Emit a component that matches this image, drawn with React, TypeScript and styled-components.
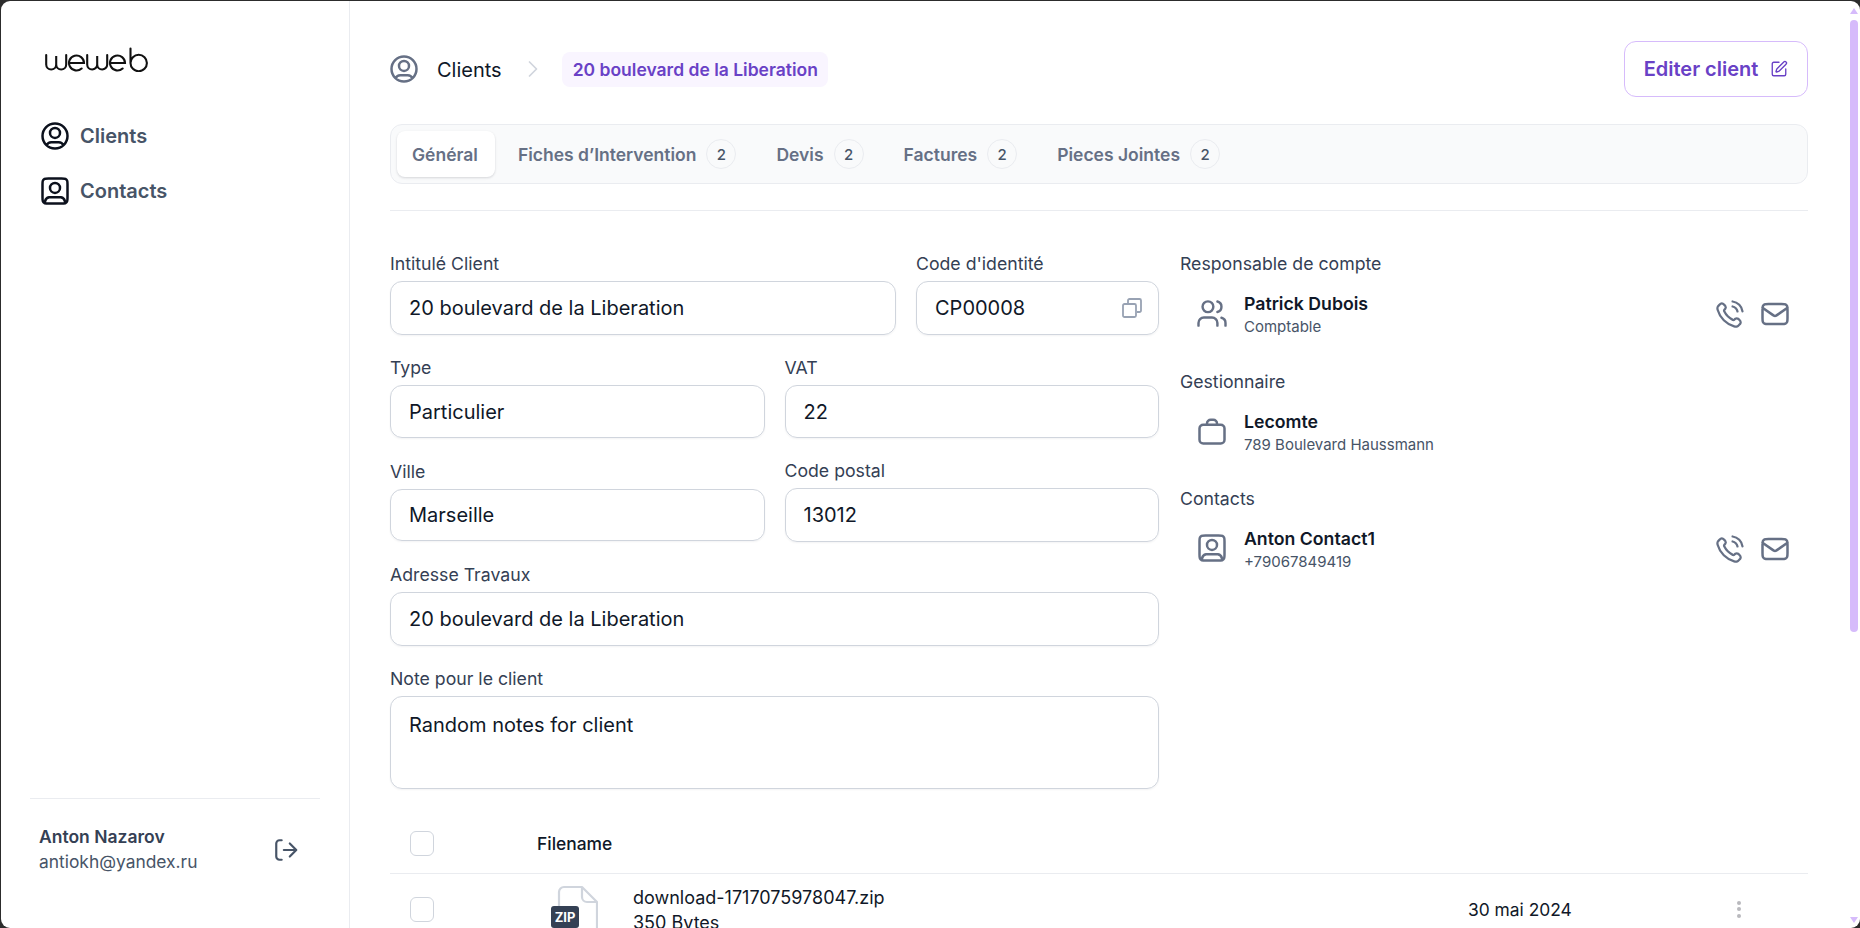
import React from "react";
import styled, { createGlobalStyle } from "styled-components";
import { ChevronRight } from "lucide-react";

const Global = createGlobalStyle`
  html, body, #root { margin: 0; padding: 0; height: 100%; }
  body { background: #2c2c2c; overflow: hidden; font-family: Inter, "Noto Sans", sans-serif; color: #101828; }
  * { box-sizing: border-box; }
`;

const Shell = styled.div`
  position: relative;
  height: 927px;
  margin: 1px 0 0 1px;
  background: #fff;
  border-radius: 9px;
  overflow: hidden;
  display: flex;
`;

const ScrollThumb = styled.div`
  position: absolute;
  top: 19px;
  right: 2px;
  width: 8px;
  height: 612px;
  border-radius: 4px;
  background: #d6bbfb;
`;

const ScrollArrow = styled.div<{ $down?: boolean }>`
  position: absolute;
  right: 2px;
  width: 0;
  height: 0;
  border-left: 4.5px solid transparent;
  border-right: 4.5px solid transparent;
  ${(p) =>
    p.$down
      ? "bottom: 5px; border-top: 6px solid #d6bbfb;"
      : "top: 7px; border-bottom: 6px solid #d6bbfb;"}
`;

const Sidebar = styled.aside`
  width: 349px;
  flex: none;
  border-right: 1px solid #eaecf0;
  padding: 46px 29px 0;
  display: flex;
  flex-direction: column;
`;

const Logo = styled.svg`
  width: 104px;
  height: 25px;
  margin-left: 15px;
  display: block;
  color: #111;
`;

const Nav = styled.nav`
  margin-top: 49px;
  display: flex;
  flex-direction: column;
  gap: 25px;
  padding-left: 10px;
`;

const NavItem = styled.a`
  display: flex;
  align-items: center;
  gap: 10px;
  height: 30px;
  font-size: 20px;
  font-weight: 600;
  color: #475467;
`;

const Footer = styled.div`
  margin-top: auto;
  height: 130px;
  border-top: 1px solid #eaecf0;
  padding: 26px 21px 0 9px;
  display: flex;
  justify-content: space-between;
  align-items: flex-start;
`;

const UserName = styled.div`
  font-size: 17.5px;
  font-weight: 600;
  line-height: 24px;
  color: #344054;
`;

const UserMail = styled.div`
  font-size: 17.4px;
  line-height: 24px;
  margin-top: 1px;
  color: #475467;
`;

const LogoutIcon = styled.svg`
  width: 26px;
  height: 26px;
  margin-top: 12px;
  color: #475467;
`;

const Main = styled.main`
  flex: 1;
  height: 927px;
  overflow: hidden;
  padding: 40px 52px 0 40px;
`;

const Header = styled.header`
  height: 56px;
  display: flex;
  align-items: center;
`;

const CrumbIcon = styled.span`
  display: flex;
  margin-left: -1px;
`;

const Crumb = styled.span`
  font-size: 20px;
  line-height: 28px;
  margin: 2px 0 0 18px;
  color: #101828;
`;

const CrumbSep = styled(ChevronRight)`
  width: 28px;
  height: 28px;
  margin: 0 15px 0 17px;
  color: #d0d5dd;
`;

const CrumbBadge = styled.span`
  height: 35px;
  padding: 0 10px 0 11px;
  border-radius: 8px;
  background: #f9f5ff;
  color: #6941c6;
  font-size: 17.5px;
  font-weight: 600;
  display: flex;
  align-items: center;
`;

const EditButton = styled.button`
  margin-left: auto;
  width: 184px;
  height: 56px;
  border: 1px solid #d6bbfb;
  border-radius: 12px;
  background: #fff;
  color: #6941c6;
  font: 600 20px Inter, sans-serif;
  display: flex;
  align-items: center;
  justify-content: center;
  gap: 12px;
`;

const Tabs = styled.div`
  margin-top: 27px;
  height: 60px;
  border: 1px solid #eaecf0;
  border-radius: 12px;
  background: #f9fafb;
  padding: 6px;
  display: flex;
  gap: 8px;
`;

const Tab = styled.div<{ $active?: boolean }>`
  height: 46px;
  padding: 0 17px 0 15px;
  border-radius: 8px;
  font-size: 17.5px;
  font-weight: 600;
  color: #667085;
  display: flex;
  align-items: center;
  gap: 10px;
  background: ${(p) => (p.$active ? "#fff" : "transparent")};
  box-shadow: ${(p) => (p.$active ? "0 1px 3px rgba(16,24,40,.1), 0 1px 2px rgba(16,24,40,.06)" : "none")};
`;

const Count = styled.span`
  width: 30px;
  height: 30px;
  border-radius: 50%;
  border: 1px solid #eaecf0;
  background: #f9fafb;
  color: #475467;
  font-size: 15px;
  font-weight: 500;
  display: flex;
  align-items: center;
  justify-content: center;
`;

const Rule = styled.hr`
  margin: 26px 0 0;
  height: 1px;
  border: 0;
  background: #eaecf0;
`;

const Columns = styled.div`
  margin-top: 41px;
  display: grid;
  grid-template-columns: 769px 1fr;
  column-gap: 21px;
`;

const Form = styled.form`
  display: grid;
  grid-template-columns: repeat(12, 1fr);
  column-gap: 20px;
  row-gap: 21px;
  align-items: center;
`;

const Field = styled.div<{ $span: number }>`
  grid-column: span ${(p) => p.$span};
  display: flex;
  flex-direction: column;
  gap: 5px;
  min-width: 0;
`;

const Label = styled.label`
  display: block;
  font-size: 17.7px;
  font-weight: 400;
  line-height: 24px;
  color: #344054;
`;

const Box = styled.div<{ $h: number; $top?: boolean }>`
  height: ${(p) => p.$h}px;
  border: 1px solid #d0d5dd;
  border-radius: 12px;
  padding: ${(p) => (p.$top ? "15px 18px" : "0 18px")};
  font-size: 20px;
  line-height: 26px;
  color: #101828;
  display: flex;
  align-items: ${(p) => (p.$top ? "flex-start" : "center")};
  justify-content: space-between;
  box-shadow: 0 1px 2px rgba(16, 24, 40, 0.05);
`;

const CopyIcon = styled.svg`
  width: 20px;
  height: 20px;
  margin-right: -2px;
  color: #98a2b3;
`;

const Side = styled.div`
  display: flex;
  flex-direction: column;
  gap: 32.5px;
`;

const Person = styled.div`
  height: 45px;
  margin-top: 16px;
  padding: 0 18px 0 17px;
  display: flex;
  align-items: center;
`;

const PersonIcon = styled.div`
  width: 30px;
  margin: 0 17px 3px 0;
  display: flex;
  align-items: center;
  justify-content: center;
  color: #667085;
`;

const PersonName = styled.div`
  font-size: 17.7px;
  font-weight: 600;
  line-height: 24px;
  color: #101828;
`;

const PersonSub = styled.div`
  font-size: 15px;
  line-height: 20px;
  margin-top: 1px;
  color: #475467;
`;

const Actions = styled.div`
  margin: 0 0 2px auto;
  display: flex;
  gap: 15px;
  color: #667085;
`;

const Table = styled.section`
  margin-top: 22px;
`;

const Row = styled.div<{ $head?: boolean }>`
  display: grid;
  grid-template-columns: 147px 931px 260px 1fr;
  align-items: center;
  padding-top: ${(p) => (p.$head ? "20px" : "0")};
  padding-bottom: ${(p) => (p.$head ? "17px" : "0")};
  height: ${(p) => (p.$head ? "63px" : "70px")};
  border-bottom: ${(p) => (p.$head ? "1px solid #eaecf0" : "none")};
`;

const Check = styled.span`
  display: block;
  margin-left: 20px;
  width: 24px;
  height: 25px;
  border: 1px solid #d0d5dd;
  border-radius: 6px;
  background: #fff;
`;

const HeadCell = styled.div`
  font-size: 17.4px;
  font-weight: 500;
  color: #101828;
`;

const FileCell = styled.div`
  display: flex;
  align-items: flex-start;
  height: 100%;
  padding: 11px 0 0 14px;
`;

const FileThumb = styled.div`
  position: relative;
  width: 47px;
  height: 56px;
  margin-right: 35px;
  flex: none;
`;

const ZipTag = styled.span`
  position: absolute;
  left: 0;
  top: 21px;
  width: 28px;
  height: 22px;
  border-radius: 3px;
  background: #344054;
  color: #fff;
  font-size: 13px;
  font-weight: 700;
  line-height: 22px;
  text-align: center;
`;

const FileName = styled.div`
  font-size: 18px;
  line-height: 25px;
  color: #101828;
`;

const DateCell = styled.div`
  font-size: 17.4px;
  color: #101828;
`;

const Dots = styled.div`
  width: 22px;
  display: flex;
  flex-direction: column;
  align-items: center;
  gap: 2.5px;
`;

const Dot = styled.span`
  width: 4px;
  height: 4px;
  border-radius: 50%;
  background: #b9b9bd;
`;

const UserCirclePath = "M5.3163 19.4384C5.92462 18.0052 7.34492 17 9 17H15C16.6551 17 18.0754 18.0052 18.6837 19.4384M16 9.5C16 11.7091 14.2091 13.5 12 13.5C9.79086 13.5 8 11.7091 8 9.5C8 7.29086 9.79086 5.5 12 5.5C14.2091 5.5 16 7.29086 16 9.5ZM22 12C22 17.5228 17.5228 22 12 22C6.47715 22 2 17.5228 2 12C2 6.47715 6.47715 2 12 2C17.5228 2 22 6.47715 22 12Z";
const UserSquarePath = "M4 21.8174C4.6026 22 5.41649 22 6.8 22H17.2C18.5835 22 19.3974 22 20 21.8174M4 21.8174C3.87081 21.7783 3.75134 21.7308 3.63803 21.673C3.07354 21.3854 2.6146 20.9265 2.32698 20.362C2 19.7202 2 18.8802 2 17.2V6.8C2 5.11984 2 4.27976 2.32698 3.63803C2.6146 3.07354 3.07354 2.6146 3.63803 2.32698C4.27976 2 5.11984 2 6.8 2H17.2C18.8802 2 19.7202 2 20.362 2.32698C20.9265 2.6146 21.3854 3.07354 21.673 3.63803C22 4.27976 22 5.11984 22 6.8V17.2C22 18.8802 22 19.7202 21.673 20.362C21.3854 20.9265 20.9265 21.3854 20.362 21.673C20.2487 21.7308 20.1292 21.7783 20 21.8174M4 21.8174C4.00033 21.0081 4.00518 20.5799 4.07686 20.2196C4.39249 18.6329 5.63288 17.3925 7.21964 17.0769C7.60603 17 8.07069 17 9 17H15C15.9293 17 16.394 17 16.7804 17.0769C18.3671 17.3925 19.6075 18.6329 19.9231 20.2196C19.9948 20.5799 19.9997 21.0081 20 21.8174M16 9.5C16 11.7091 14.2091 13.5 12 13.5C9.79086 13.5 8 11.7091 8 9.5C8 7.29086 9.79086 5.5 12 5.5C14.2091 5.5 16 7.29086 16 9.5Z";
const PhonePath = "M14.0497 6C15.0264 6.19057 15.924 6.66826 16.6277 7.37194C17.3314 8.07561 17.8091 8.97326 17.9997 9.95M14.0497 2C16.0789 2.22544 17.9713 3.13417 19.4159 4.57701C20.8606 6.01984 21.7717 7.91101 21.9997 9.94M10.2266 13.8631C9.02506 12.6615 8.07627 11.3028 7.38028 9.85323C7.32041 9.72854 7.29048 9.66619 7.26748 9.5873C7.18576 9.30695 7.24446 8.96269 7.41447 8.72526C7.46231 8.65845 7.51947 8.60129 7.63378 8.48698C7.98338 8.13737 8.15819 7.96257 8.27247 7.78679C8.70347 7.1239 8.70347 6.26932 8.27247 5.60643C8.15819 5.43065 7.98338 5.25585 7.63378 4.90624L7.43891 4.71137C6.90747 4.17993 6.64174 3.91421 6.35636 3.76987C5.7888 3.4828 5.11854 3.4828 4.55098 3.76987C4.2656 3.91421 3.99987 4.17993 3.46843 4.71137L3.3108 4.86901C2.78117 5.39863 2.51636 5.66344 2.31411 6.02348C2.08969 6.42298 1.92833 7.04347 1.9297 7.5017C1.93092 7.91464 2.01103 8.19687 2.17124 8.76131C3.03221 11.7947 4.65668 14.6571 7.04466 17.045C9.43264 19.433 12.295 21.0575 15.3284 21.9185C15.8928 22.0787 16.1751 22.1588 16.588 22.16C17.0462 22.1614 17.6667 22 18.0662 21.7756C18.4263 21.5733 18.6911 21.3085 19.2207 20.7789L19.3783 20.6213C19.9098 20.0898 20.1755 19.8241 20.3198 19.5387C20.6069 18.9712 20.6069 18.3009 20.3198 17.7333C20.1755 17.448 19.9098 17.1822 19.3783 16.6508L19.1835 16.4559C18.8339 16.1063 18.6591 15.9315 18.4833 15.8172C17.8204 15.3862 16.9658 15.3862 16.3029 15.8172C16.1271 15.9315 15.9523 16.1063 15.6027 16.4559C15.4884 16.5702 15.4313 16.6274 15.3644 16.6752C15.127 16.8453 14.7828 16.904 14.5024 16.8222C14.4235 16.7992 14.3612 16.7693 14.2365 16.7094C12.7869 16.0134 11.4282 15.0646 10.2266 13.8631Z";
const MailPath = "M2 7L10.1649 12.7154C10.8261 13.1783 11.1567 13.4097 11.5163 13.4993C11.8339 13.5785 12.1661 13.5785 12.4837 13.4993C12.8433 13.4097 13.1739 13.1783 13.8351 12.7154L22 7M6.8 20H17.2C18.8802 20 19.7202 20 20.362 19.673C20.9265 19.3854 21.3854 18.9265 21.673 18.362C22 17.7202 22 16.8802 22 15.2V8.8C22 7.11984 22 6.27976 21.673 5.63803C21.3854 5.07354 20.9265 4.6146 20.362 4.32698C19.7202 4 18.8802 4 17.2 4H6.8C5.11984 4 4.27976 4 3.63803 4.32698C3.07354 4.6146 2.6146 5.07354 2.32698 5.63803C2 6.27976 2 7.11984 2 8.8V15.2C2 16.8802 2 17.7202 2.32698 18.362C2.6146 18.9265 3.07354 19.3854 3.63803 19.673C4.27976 20 5.11984 20 6.8 20Z";

const Ico = ({ d, size = 30, w = 2, color }: { d: string; size?: number; w?: number; color: string }) => (
  <svg width={size} height={size} viewBox="0 0 24 24" fill="none" stroke={color} strokeWidth={w} strokeLinecap="round" strokeLinejoin="round" style={{ flex: "none" }}>
    <path d={d} />
  </svg>
);

const ContactActions = () => (
  <Actions>
    <Ico d={PhonePath} color="#667085" w={1.8} />
    <Ico d={MailPath} color="#667085" />
  </Actions>
);

const tabs = [
  { label: "Fiches d’Intervention", n: 2 },
  { label: "Devis", n: 2 },
  { label: "Factures", n: 2 },
  { label: "Pieces Jointes", n: 2 },
];

export default function App() {
  return (
    <Shell>
      <Global />
      <Sidebar>
        <Logo viewBox="0 0 104 25" fill="none" stroke="currentColor" strokeWidth={2.1} strokeLinecap="round" role="img" aria-label="weweb">
          <path d="M1.2 8v9.5a5 5 0 0 0 10 0V9v8.5a5 5 0 0 0 10 0V8" />
          <path d="M24 16h15a7.5 7.5 0 1 0-2.4 5.5" />
          <path d="M42.2 8v9.5a5 5 0 0 0 10 0V9v8.5a5 5 0 0 0 10 0V8" />
          <path d="M65 16h15a7.5 7.5 0 1 0-2.4 5.5" />
          <path d="M85.5 1.5V16a8.2 8.2 0 1 0 8.2-8.2 8.2 8.2 0 0 0-8.2 8.2" />
        </Logo>
        <Nav>
          <NavItem><Ico d={UserCirclePath} color="#0c111d" />Clients</NavItem>
          <NavItem><Ico d={UserSquarePath} color="#0c111d" />Contacts</NavItem>
        </Nav>
        <Footer>
          <div>
            <UserName>Anton Nazarov</UserName>
            <UserMail>antiokh@yandex.ru</UserMail>
          </div>
          <LogoutIcon viewBox="0 0 24 24" fill="none" stroke="currentColor" strokeWidth={2} strokeLinecap="round" strokeLinejoin="round">
            <path d="M8 3H6a3 3 0 0 0-3 3v12a3 3 0 0 0 3 3h2" />
            <path d="M10 12h11M15.5 6l6 6-6 6" />
          </LogoutIcon>
        </Footer>
      </Sidebar>

      <Main>
        <Header>
          <CrumbIcon><Ico d={UserCirclePath} color="#667085" /></CrumbIcon>
          <Crumb>Clients</Crumb>
          <CrumbSep strokeWidth={1.5} />
          <CrumbBadge>20 boulevard de la Liberation</CrumbBadge>
          <EditButton>
            Editer client
            <svg width="18" height="18" viewBox="0 0 24 24" fill="none" stroke="currentColor" strokeWidth={1.8} strokeLinecap="round" strokeLinejoin="round">
              <path d="M12 3H5a2 2 0 0 0-2 2v14a2 2 0 0 0 2 2h14a2 2 0 0 0 2-2v-7" />
              <path d="M18.375 2.625a1 1 0 0 1 3 3l-9.013 9.014a2 2 0 0 1-.853.505l-2.873.84a.5.5 0 0 1-.62-.62l.84-2.873a2 2 0 0 1 .506-.852z" />
            </svg>
          </EditButton>
        </Header>

        <Tabs>
          <Tab $active>Général</Tab>
          {tabs.map((t) => (
            <Tab key={t.label}>
              {t.label}
              <Count>{t.n}</Count>
            </Tab>
          ))}
        </Tabs>
        <Rule />

        <Columns>
          <Form>
            <Field $span={8}>
              <Label>Intitulé Client</Label>
              <Box $h={54}>20 boulevard de la Liberation</Box>
            </Field>
            <Field $span={4}>
              <Label>Code d'identité</Label>
              <Box $h={54}>
                CP00008
                <CopyIcon viewBox="0 0 20 20" fill="none" stroke="currentColor" strokeWidth={1.8}>
                  <rect x="1" y="6" width="13" height="13" rx="1.5" />
                  <path d="M6 5.5V2.5A1.5 1.5 0 0 1 7.5 1h10A1.5 1.5 0 0 1 19 2.5v10a1.5 1.5 0 0 1-1.5 1.5H15" />
                </CopyIcon>
              </Box>
            </Field>
            <Field $span={6}>
              <Label>Type</Label>
              <Box $h={53}>Particulier</Box>
            </Field>
            <Field $span={6}>
              <Label>VAT</Label>
              <Box $h={53}>22</Box>
            </Field>
            <Field $span={6}>
              <Label>Ville</Label>
              <Box $h={52}>Marseille</Box>
            </Field>
            <Field $span={6}>
              <Label>Code postal</Label>
              <Box $h={54}>13012</Box>
            </Field>
            <Field $span={12}>
              <Label>Adresse Travaux</Label>
              <Box $h={54}>20 boulevard de la Liberation</Box>
            </Field>
            <Field $span={12}>
              <Label>Note pour le client</Label>
              <Box $h={93} $top>Random notes for client</Box>
            </Field>
          </Form>

          <Side>
            <div>
              <Label>Responsable de compte</Label>
              <Person>
                <PersonIcon>
                  <svg width="30" height="27" viewBox="1 2 22 20" fill="none" stroke="currentColor" strokeWidth={1.8} strokeLinecap="round" strokeLinejoin="round">
                    <path d="M16 21v-2a4 4 0 0 0-4-4H6a4 4 0 0 0-4 4v2" />
                    <circle cx="9" cy="7" r="4" />
                    <path d="M22 21v-2a4 4 0 0 0-3-3.87" />
                    <path d="M16 3.13a4 4 0 0 1 0 7.75" />
                  </svg>
                </PersonIcon>
                <div>
                  <PersonName>Patrick Dubois</PersonName>
                  <PersonSub>Comptable</PersonSub>
                </div>
                <ContactActions />
              </Person>
            </div>
            <div>
              <Label>Gestionnaire</Label>
              <Person>
                <PersonIcon>
                  <svg width="30" height="30" viewBox="0 0 24 24" fill="none" stroke="currentColor" strokeWidth={2} strokeLinecap="round" strokeLinejoin="round">
                    <rect x="2" y="7" width="20" height="15" rx="3" />
                    <path d="M8 7V6a3 3 0 0 1 3-3h2a3 3 0 0 1 3 3v1" />
                  </svg>
                </PersonIcon>
                <div>
                  <PersonName>Lecomte</PersonName>
                  <PersonSub>789 Boulevard Haussmann</PersonSub>
                </div>
              </Person>
            </div>
            <div>
              <Label>Contacts</Label>
              <Person>
                <PersonIcon>
                  <Ico d={UserSquarePath} color="currentColor" />
                </PersonIcon>
                <div>
                  <PersonName>Anton Contact1</PersonName>
                  <PersonSub>+79067849419</PersonSub>
                </div>
                <ContactActions />
              </Person>
            </div>
          </Side>
        </Columns>

        <Table>
          <Row $head>
            <Check />
            <HeadCell>Filename</HeadCell>
          </Row>
          <Row>
            <Check />
            <FileCell>
              <FileThumb>
                <svg width="47" height="56" viewBox="0 0 47 56" fill="none" stroke="#d0d5dd" strokeWidth={2.2} strokeLinejoin="round">
                  <path d="M13 2h18l15 15v38H8V7a5 5 0 0 1 5-5z" />
                  <path d="M31 2v10a5 5 0 0 0 5 5h10" />
                </svg>
                <ZipTag>ZIP</ZipTag>
              </FileThumb>
              <div>
                <FileName>download-1717075978047.zip</FileName>
                <FileName>350 Bytes</FileName>
              </div>
            </FileCell>
            <DateCell>30 mai 2024</DateCell>
            <Dots><Dot /><Dot /><Dot /></Dots>
          </Row>
        </Table>
      </Main>

      <ScrollArrow />
      <ScrollThumb />
      <ScrollArrow $down />
    </Shell>
  );
}
